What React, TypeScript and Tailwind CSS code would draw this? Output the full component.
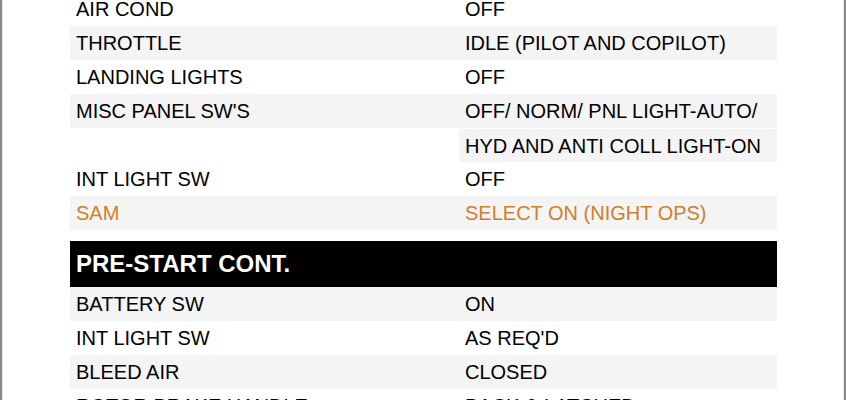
import React from 'react';

type Row = { item: string; action: string; shade?: boolean; accent?: boolean; only?: boolean };

const top: Row[] = [
  { item: 'AIR COND', action: 'OFF' },
  { item: 'THROTTLE', action: 'IDLE (PILOT AND COPILOT)', shade: true },
  { item: 'LANDING LIGHTS', action: 'OFF' },
  { item: "MISC PANEL SW'S", action: 'OFF/ NORM/ PNL LIGHT-AUTO/', shade: true },
  { item: '', action: 'HYD AND ANTI COLL LIGHT-ON', only: true },
  { item: 'INT LIGHT SW', action: 'OFF' },
  { item: 'SAM', action: 'SELECT ON (NIGHT OPS)', shade: true, accent: true },
];

const preStart: Row[] = [
  { item: 'BATTERY SW', action: 'ON', shade: true },
  { item: 'INT LIGHT SW', action: "AS REQ'D" },
  { item: 'BLEED AIR', action: 'CLOSED', shade: true },
  { item: 'ROTOR BRAKE HANDLE', action: 'BACK & LATCHED' },
  { item: 'FUEL SHUT OFF', action: 'OPEN', shade: true },
];

function ChecklistRow({ row }: { row: Row }) {
  const color = row.accent ? 'text-[#cf7f2b]' : 'text-black';
  return (
    <div className={`flex h-[34px] ${row.shade ? 'bg-[#f4f4f4]' : ''} ${color}`}>
      <div className="w-[389px] flex items-center pl-[6px]">{row.item}</div>
      <div
        className={`flex-1 flex items-center pl-[6px] ${row.only ? 'bg-[#f4f4f4] border-t border-white' : ''}`}
      >
        {row.action}
      </div>
    </div>
  );
}

export default function App() {
  return (
    <div className="h-[400px] w-[846px] overflow-hidden bg-white flex">
      <div className="w-[3px] border-l-2 border-[#8a8a8a] bg-[#e4e4e4]" />
      <div className="flex-1 pl-[67px] pr-[66px] font-['Liberation_Sans',Arial,sans-serif] text-[20px] leading-none">
        <div className="-mt-[8px] w-[707px]">
          {top.map((r, i) => (
            <ChecklistRow key={i} row={r} />
          ))}
          <div className="mt-[11px] h-[46px] bg-black text-white font-bold text-[24px] flex items-center pl-[6px]">
            PRE-START CONT.
          </div>
          {preStart.map((r, i) => (
            <ChecklistRow key={i} row={r} />
          ))}
        </div>
      </div>
      <div className="w-[3px] border-r-2 border-[#8a8a8a] bg-[#e4e4e4]" />
    </div>
  );
}
